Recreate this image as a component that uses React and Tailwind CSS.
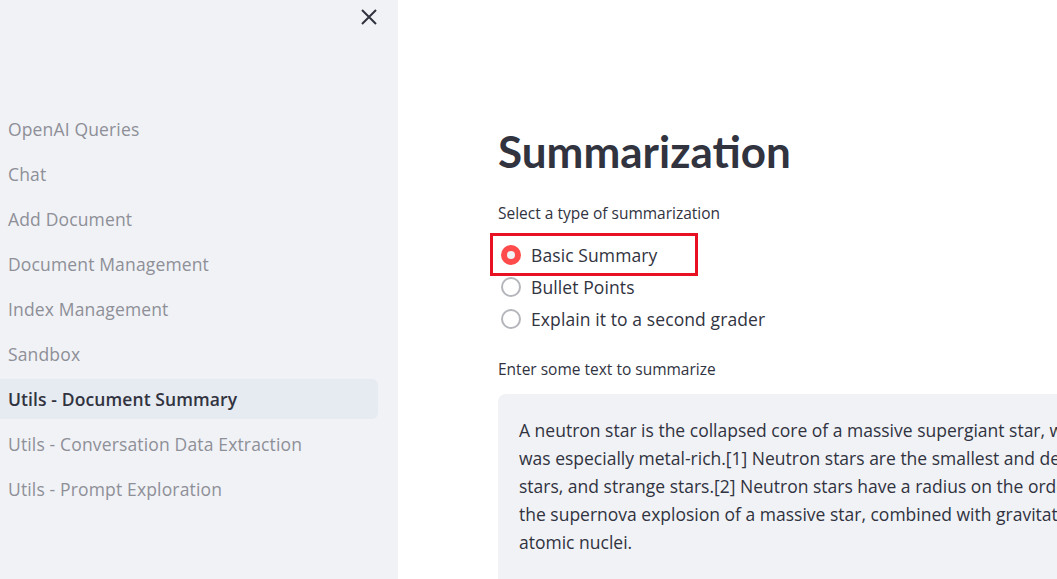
import React, { useState } from "react";

const pages = [
  "OpenAI Queries",
  "Chat",
  "Add Document",
  "Document Management",
  "Index Management",
  "Sandbox",
  "Utils - Document Summary",
  "Utils - Conversation Data Extraction",
  "Utils - Prompt Exploration",
];

const options = ["Basic Summary", "Bullet Points", "Explain it to a second grader"];

// the text box is wider than the window, so lines are set as in the app
const lines = [
  "A neutron star is the collapsed core of a massive supergiant star, which had a total mass of between 10 and 25 solar masses, possibly more if the star",
  "was especially metal-rich.[1] Neutron stars are the smallest and densest stellar objects, excluding black holes and hypothetical white holes, quark",
  "stars, and strange stars.[2] Neutron stars have a radius on the order of 10 kilometres (6.2 mi) and a mass of about 1.4 solar masses.[3] They result from",
  "the supernova explosion of a massive star, combined with gravitational collapse, that compresses the core past white dwarf star density to that of",
  "atomic nuclei.",
];

const App = () => {
  const [choice, setChoice] = useState(0);

  return (
    <div
      className="flex h-[579px] w-[1057px] overflow-hidden bg-white text-[#31333f]"
      style={{ fontFamily: "'Open Sans', 'Liberation Sans', sans-serif" }}
    >
      {/* sidebar */}
      <aside className="relative flex w-[398px] shrink-0 flex-col bg-[#f0f2f6] pr-[20px] pt-[109px]">
        <button className="absolute left-[361px] top-[9px] text-[#31333f]">
          <svg width="16" height="16" viewBox="0 0 16 16" fill="none" stroke="currentColor" strokeWidth="2">
            <path d="M1 1 L15 15 M15 1 L1 15" />
          </svg>
        </button>
        <nav className="flex flex-col gap-[5px]">
          {pages.map((p) => {
            const active = p === "Utils - Document Summary";
            return (
              <div
                key={p}
                className={
                  active
                    ? "flex h-[40px] items-center rounded-r-md bg-[#e6eaf1] pl-[8px] text-[17.5px] font-semibold tracking-[0.1px] text-[#31333f]"
                    : "flex h-[40px] items-center pl-[8px] text-[17.5px] tracking-[0.15px] text-[#8e8f97]"
                }
              >
                {p}
              </div>
            );
          })}
        </nav>
      </aside>

      {/* main */}
      <main className="flex min-w-0 flex-1 flex-col pl-[100px] pt-[123px]">
        <h1
          className="text-[44px] font-bold leading-[56px]"
          style={{ fontFamily: "Lato, 'Open Sans', sans-serif" }}
        >
          Summarization
        </h1>

        <p className="mt-[24px] text-[15.5px] leading-[20px]">Select a type of summarization</p>

        <div className="mt-[16px] flex flex-col">
          {options.map((o, i) => (
            <label
              key={o}
              onClick={() => setChoice(i)}
              className="relative flex h-[32px] cursor-pointer items-center gap-[10px] pl-[3px] text-[17.5px] tracking-[0.1px]"
            >
              {i === 0 && (
                <span className="pointer-events-none absolute left-[-8px] top-[-6px] h-[43px] w-[208px] border-[3px] border-[#e81123]" />
              )}
              <span
                className={
                  choice === i
                    ? "flex h-[20px] w-[20px] shrink-0 items-center justify-center rounded-full bg-[#ff4b4b]"
                    : "flex h-[20px] w-[20px] shrink-0 items-center justify-center rounded-full border-2 border-[#b5b6bb] bg-white"
                }
              >
                {choice === i && <span className="h-[8px] w-[8px] rounded-full bg-[#f0f2f6]" />}
              </span>
              {o}
            </label>
          ))}
        </div>

        <p className="mt-[24px] text-[15.5px] leading-[20px]">Enter some text to summarize</p>

        <div className="mt-[15px] w-[1200px] shrink-0 overflow-hidden rounded-[8px] bg-[#f0f2f6] px-[21px] pb-[60px] pt-[22px] text-[17.5px] leading-[28px]">
          {lines.map((l) => (
            <div key={l} className="whitespace-nowrap">
              {l}
            </div>
          ))}
        </div>
      </main>
    </div>
  );
};

export default App;
